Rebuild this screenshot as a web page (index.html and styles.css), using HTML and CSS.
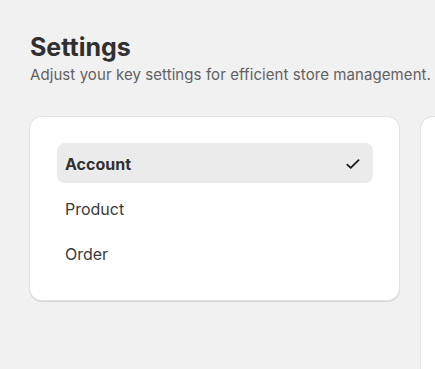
FILE: index.html
```html
<!DOCTYPE html>
<html>
<head>
<meta charset="utf-8">
<link rel="stylesheet" href="styles.css">
</head>
<body>
<div class="page">
  <header class="header">
    <h1 class="title">Settings</h1>
    <p class="subtitle">Adjust your key settings for efficient store management.</p>
  </header>
  <div class="cards">
    <div class="card menu">
      <div class="item active">
        <span class="label">Account</span>
        <svg class="check" width="20" height="20" viewBox="0 0 20 20"><path d="M4.3 10.6l3.4 3.3 7.9-7.8" fill="none" stroke="#1a1a1a" stroke-width="1.8" stroke-linecap="round" stroke-linejoin="round"/></svg>
      </div>
      <div class="item"><span class="label">Product</span></div>
      <div class="item"><span class="label">Order</span></div>
    </div>
    <div class="card side"></div>
  </div>
</div>
</body>
</html>
```
FILE: styles.css
```css
* { box-sizing: border-box; }
html, body { margin: 0; padding: 0; }
body {
  background: #f1f1f1;
  font-family: Inter, "Noto Sans", sans-serif;
  color: #303030;
  overflow: hidden;
}
.page {
  padding: 31px 0 0 30px;
  width: 700px;
}
.header { margin-bottom: 30px; }
.title {
  margin: 0;
  font-size: 25px;
  line-height: 32px;
  font-weight: 700;
  color: #303030;
}
.subtitle {
  margin: 0;
  font-size: 15px;
  line-height: 24px;
  letter-spacing: 0.08px;
  color: #616161;
}
.cards {
  display: flex;
  gap: 22px;
  align-items: flex-start;
}
.card {
  flex-shrink: 0;
  background: #fff;
  border-radius: 12px;
  box-shadow: 0 0 0 1px #e3e3e3, 0 1px 0 1px #d4d4d4;
}
.menu {
  width: 369px;
  padding: 26px 26px 27px 27px;
  display: flex;
  flex-direction: column;
  gap: 5px;
}
.side {
  width: 200px;
  height: 300px;
}
.item {
  height: 40px;
  display: flex;
  align-items: center;
  justify-content: space-between;
  padding: 1px 10px 0 8px;
  border-radius: 8px;
  font-size: 16px;
  color: #3a3a3a;
}
.item.active {
  background: #ebebeb;
  font-weight: 700;
  color: #303030;
}
.check { display: block; }
```
